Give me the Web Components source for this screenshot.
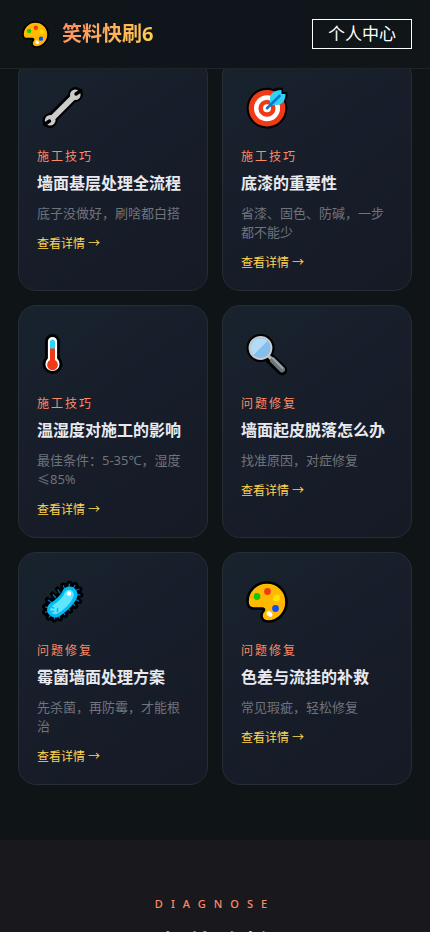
<!DOCTYPE html>
<html lang="zh-CN">
<head>
<meta charset="UTF-8">
<meta name="viewport" content="width=device-width, initial-scale=1.0">
<title>笑料快刷6</title>
<style>
  body {
    margin: 0;
    background: #0f1417;
    color: #e8eaf0;
    font-family: "Noto Sans", "Noto Sans CJK SC", sans-serif;
  }

  main {
    padding-top: 58px;
  }
</style>
</head>
<body>
<site-header brand="笑料快刷6"></site-header>

<main>
  <tip-grid>
    <tip-card icon="wrench" tag="施工技巧" heading="墙面基层处理全流程">底子没做好，刷啥都白搭</tip-card>
    <tip-card icon="target" tag="施工技巧" heading="底漆的重要性">省漆、固色、防碱，一步都不能少</tip-card>
    <tip-card icon="thermometer" tag="施工技巧" heading="温湿度对施工的影响">最佳条件：5-35℃，湿度≤85%</tip-card>
    <tip-card icon="magnifier" tag="问题修复" heading="墙面起皮脱落怎么办">找准原因，对症修复</tip-card>
    <tip-card icon="microbe" tag="问题修复" heading="霉菌墙面处理方案">先杀菌，再防霉，才能根治</tip-card>
    <tip-card icon="palette" tag="问题修复" heading="色差与流挂的补救">常见瑕疵，轻松修复</tip-card>
  </tip-grid>
  <section-intro label="DIAGNOSE">智能诊断</section-intro>
</main>

<script>
const ICONS = {
  palette: `
    <path d="M21 1.500C10 1.500 1.500 10 1.500 20.500C1.500 25 4 27.500 7.500 27.500H16C18 27.500 18.500 28.500 17.500 30C13.500 34.500 16 40.500 22 40.500C32 40.500 40.500 32 40.500 21C40.500 10 32 1.500 21 1.500Z" fill="#ffb900" stroke="#000" stroke-width="2.600"/>
    <circle cx="11" cy="15.500" r="3.400" fill="#16c60c"/>
    <circle cx="21.500" cy="10.500" r="3.400" fill="#f03a17"/>
    <circle cx="30.500" cy="17" r="3.400" fill="#ffe000"/>
    <circle cx="29.500" cy="27.500" r="3.400" fill="#0f4cff"/>
    <ellipse cx="23.500" cy="33" rx="3.200" ry="2.400" transform="rotate(40 23.500 33)" fill="#fff"/>`,
  wrench: `
    <g stroke="#000" stroke-linecap="round">
      <path d="M8 33L33.500 7.500" stroke-width="10.500"/>
      <circle cx="33.500" cy="7.500" r="7"/>
      <circle cx="8" cy="33.500" r="7"/>
    </g>
    <path d="M9 32.500L32.500 9" stroke="#ccc" stroke-width="5.600"/>
    <circle cx="33.300" cy="7.700" r="5.300" fill="#ccc"/>
    <circle cx="8.200" cy="33.300" r="5.300" fill="#ccc"/>
    <path d="M34 7L39 3.500M7.500 34L2.500 37.500" stroke="#000" stroke-width="3.400" stroke-linecap="round"/>`,
  target: `
    <path d="M21 .8C9.800 .8 .8 9.800 .8 21.200S9.800 41.600 21 41.600S41.300 32.500 41.300 21.200C41.300 18 40.500 15.500 39.500 13L41.300 10.500V5H37V.8H30L27 2.200C25 1.200 23 .8 21 .8Z" fill="#000"/>
    <circle cx="21" cy="21.200" r="18.300" fill="#f03a17"/>
    <circle cx="21" cy="21.200" r="10.800" fill="none" stroke="#fff" stroke-width="4.500"/>
    <circle cx="21" cy="21.200" r="4" fill="#fff"/>
    <path d="M24 17V11C24 7 28 3 35.500 3V7H39.500C39.500 14 36 18 31 18H24Z" fill="#31d2f7"/>
    <path d="M21 21.200L33.500 9" fill="none" stroke="#0078d7" stroke-width="2.600" stroke-linecap="round"/>`,
  thermometer: `
    <path d="M4.500 7.500a6 6 0 0 1 12 0V24a8.500 8.500 0 1 1-12 0Z" fill="#fff" stroke="#000" stroke-width="2.800"/>
    <path d="M8 8a2.500 2.500 0 0 1 5 0V15H8Z" fill="#31d2f7"/>
    <path d="M8 14.500h5V26a5.400 5.400 0 1 1-5 0Z" fill="#f03a17"/>`,
  magnifier: `
    <path d="M23.500 24L36 36" stroke="#000" stroke-width="10.500" stroke-linecap="round"/>
    <circle cx="14.500" cy="14" r="14" fill="#000"/>
    <path d="M22.500 22L27 26.500" stroke="#bbb" stroke-width="3.400"/>
    <path d="M27 26.500L36 35.500" stroke="#69797e" stroke-width="6" stroke-linecap="round"/>
    <path d="M26.500 24L36.500 34" stroke="#9aa5a9" stroke-width="2" stroke-linecap="round"/>
    <circle cx="14.500" cy="14" r="11" fill="#83beec" stroke="#ccc" stroke-width="1.800"/>
    <path d="M7.500 21A9.900 9.900 0 0 1 21.500 7Z" fill="#b3dbf5"/>`,
  microbe: `
    <path d="M12.500 28.500C17 26.500 26 18.500 28 12.500" fill="none" stroke="#000" stroke-width="23" stroke-linecap="round"/>
    <g fill="none" stroke-linecap="round">
      <path d="M2.500 25.500L7 27M2.500 31.500L7 30.500M6.500 37L9.500 33.500M12.500 39V34.500M18 38L16.500 33.500M23.500 34.500L20.500 30.500M28.500 30L25 26M33.500 25.500L30 21.500M37.500 20.500L33 18M39 14L34.500 13.500M38 8L33.500 9.500M33.500 3.500L31 7.500M27.500 2L27 6.500M21 4L23 8.500M15.500 8L18 12M10.500 13L13.500 16.500M5.500 18.500L9.500 21.500" stroke="#000" stroke-width="5"/>
      <path d="M3.500 26L7 27M3.500 31.200L7 30.500M7.200 36.200L9.500 33.500M12.500 38V34.500M17.700 37L16.500 33.500M22.800 33.600L20.500 30.500M27.800 29.200L25 26M32.800 24.700L30 21.500M36.500 20L33 18M38 13.900L34.500 13.500M37 8.300L33.500 9.500M33 4.300L31 7.500M27.400 3L27 6.500M21.400 4.900L23 8.500M16 8.800L18 12M11.200 13.800L13.500 16.500M6.300 19.200L9.500 21.500" stroke="#0078d7" stroke-width="1.200"/>
    </g>
    <path d="M13 28.500C17 26.500 26 18.500 27.500 13.500" fill="none" stroke="#00bcf2" stroke-width="16" stroke-linecap="round"/>
    <path d="M13 28.500C17 26.500 25.500 19.500 27 13.500" fill="none" stroke="#61e5ff" stroke-width="9.500" stroke-linecap="round"/>
    <circle cx="27" cy="12.500" r="2.200" fill="#fff"/>
    <path d="M9.500 26l2 1M9.500 30.500h2M15.500 27.500v3" stroke="#00bcf2" stroke-width="1.600" stroke-linecap="round"/>`
};

class EmojiIcon extends HTMLElement {
  constructor() {
    super();
    this.attachShadow({ mode: 'open' });
    this.shadowRoot.innerHTML = `
      <style>
        :host {
          display: block;
          width: 42px;
          height: 42px;
        }

        svg {
          display: block;
          width: 100%;
          height: 100%;
        }
      </style>
      <svg viewBox="0 0 42 42" aria-hidden="true">${ICONS[this.getAttribute('name')]}</svg>
    `;
  }
}

customElements.define('emoji-icon', EmojiIcon);

class SiteHeader extends HTMLElement {
  constructor() {
    super();
    this.attachShadow({ mode: 'open' });
    this.shadowRoot.innerHTML = `
      <style>
        /* stays on top while the cards scroll underneath */
        :host {
          position: fixed;
          top: 0;
          left: 0;
          right: 0;
          z-index: 10;
          box-sizing: border-box;
          height: 69px;
          padding: 0 18px 0 22px;
          display: flex;
          align-items: center;
          justify-content: space-between;
          background: linear-gradient(90deg, #101518, #10151d 50%, #101518);
          border-bottom: 1px solid #202427;
        }

        .logo {
          display: flex;
          align-items: center;
          gap: 13px;
          text-decoration: none;
        }

        emoji-icon {
          width: 27px;
          height: 27px;
        }

        .brand {
          font-size: 20px;
          line-height: 28px;
          font-weight: 700;
          color: transparent;
          background: linear-gradient(135deg, #ff8a65, #ffd54f);
          background-clip: text;
          -webkit-background-clip: text;
        }

        button {
          height: 30px;
          padding: 0 15px;
          border: 1px solid #fff;
          background: transparent;
          color: #fff;
          font-family: inherit;
          font-size: 17px;
          line-height: 28px;
        }
      </style>
      <a class="logo" href="#">
        <emoji-icon name="palette"></emoji-icon>
        <span class="brand">${this.getAttribute('brand')}</span>
      </a>
      <button type="button">个人中心</button>
    `;
  }
}

customElements.define('site-header', SiteHeader);

class TipGrid extends HTMLElement {
  constructor() {
    super();
    this.attachShadow({ mode: 'open' });
    this.shadowRoot.innerHTML = `
      <style>
        :host {
          display: grid;
          grid-template-columns: repeat(2, minmax(0, 1fr));
          gap: 14px;
          padding: 0 18px 55px;
        }
      </style>
      <slot></slot>
    `;
  }
}

customElements.define('tip-grid', TipGrid);

class TipCard extends HTMLElement {
  constructor() {
    super();
    this.attachShadow({ mode: 'open' });
    this.shadowRoot.innerHTML = `
      <style>
        :host {
          display: block;
          padding: 28px 18px 18px;
          border: 1px solid #262d37;
          border-radius: 18px;
          background: linear-gradient(145deg, #18232e, #171c29 60%, #151a25);
        }

        emoji-icon {
          margin: 0 0 20px 5px;
        }

        .tag {
          font-size: 12px;
          line-height: 16px;
          letter-spacing: 2px;
          color: #ff8a65;
        }

        h3 {
          margin: 7px 0 10px;
          font-size: 16px;
          line-height: 22px;
          font-weight: 700;
          white-space: nowrap;
        }

        p {
          margin: 0 0 11px;
          font-size: 13px;
          line-height: 19px;
          color: #6f737b;
        }

        a {
          display: block;
          font-size: 12px;
          line-height: 19px;
          color: #ffd54f;
          text-decoration: none;
        }
      </style>
      <emoji-icon name="${this.getAttribute('icon')}"></emoji-icon>
      <div class="tag">${this.getAttribute('tag')}</div>
      <h3>${this.getAttribute('heading')}</h3>
      <p><slot></slot></p>
      <a href="#">查看详情 →</a>
    `;
  }
}

customElements.define('tip-card', TipCard);

class SectionIntro extends HTMLElement {
  constructor() {
    super();
    this.attachShadow({ mode: 'open' });
    this.shadowRoot.innerHTML = `
      <style>
        :host {
          display: block;
          padding: 56px 18px;
          background: #19181d;
          text-align: center;
        }

        .label {
          font-size: 11px;
          line-height: 16px;
          letter-spacing: 8px;
          font-weight: 500;
          color: #ff8a65;
        }

        h2 {
          margin: 14px 0 0;
          font-size: 26px;
          line-height: 36px;
          font-weight: 700;
        }
      </style>
      <div class="label">${this.getAttribute('label')}</div>
      <h2><slot></slot></h2>
    `;
  }
}

customElements.define('section-intro', SectionIntro);
</script>
</body>
</html>
